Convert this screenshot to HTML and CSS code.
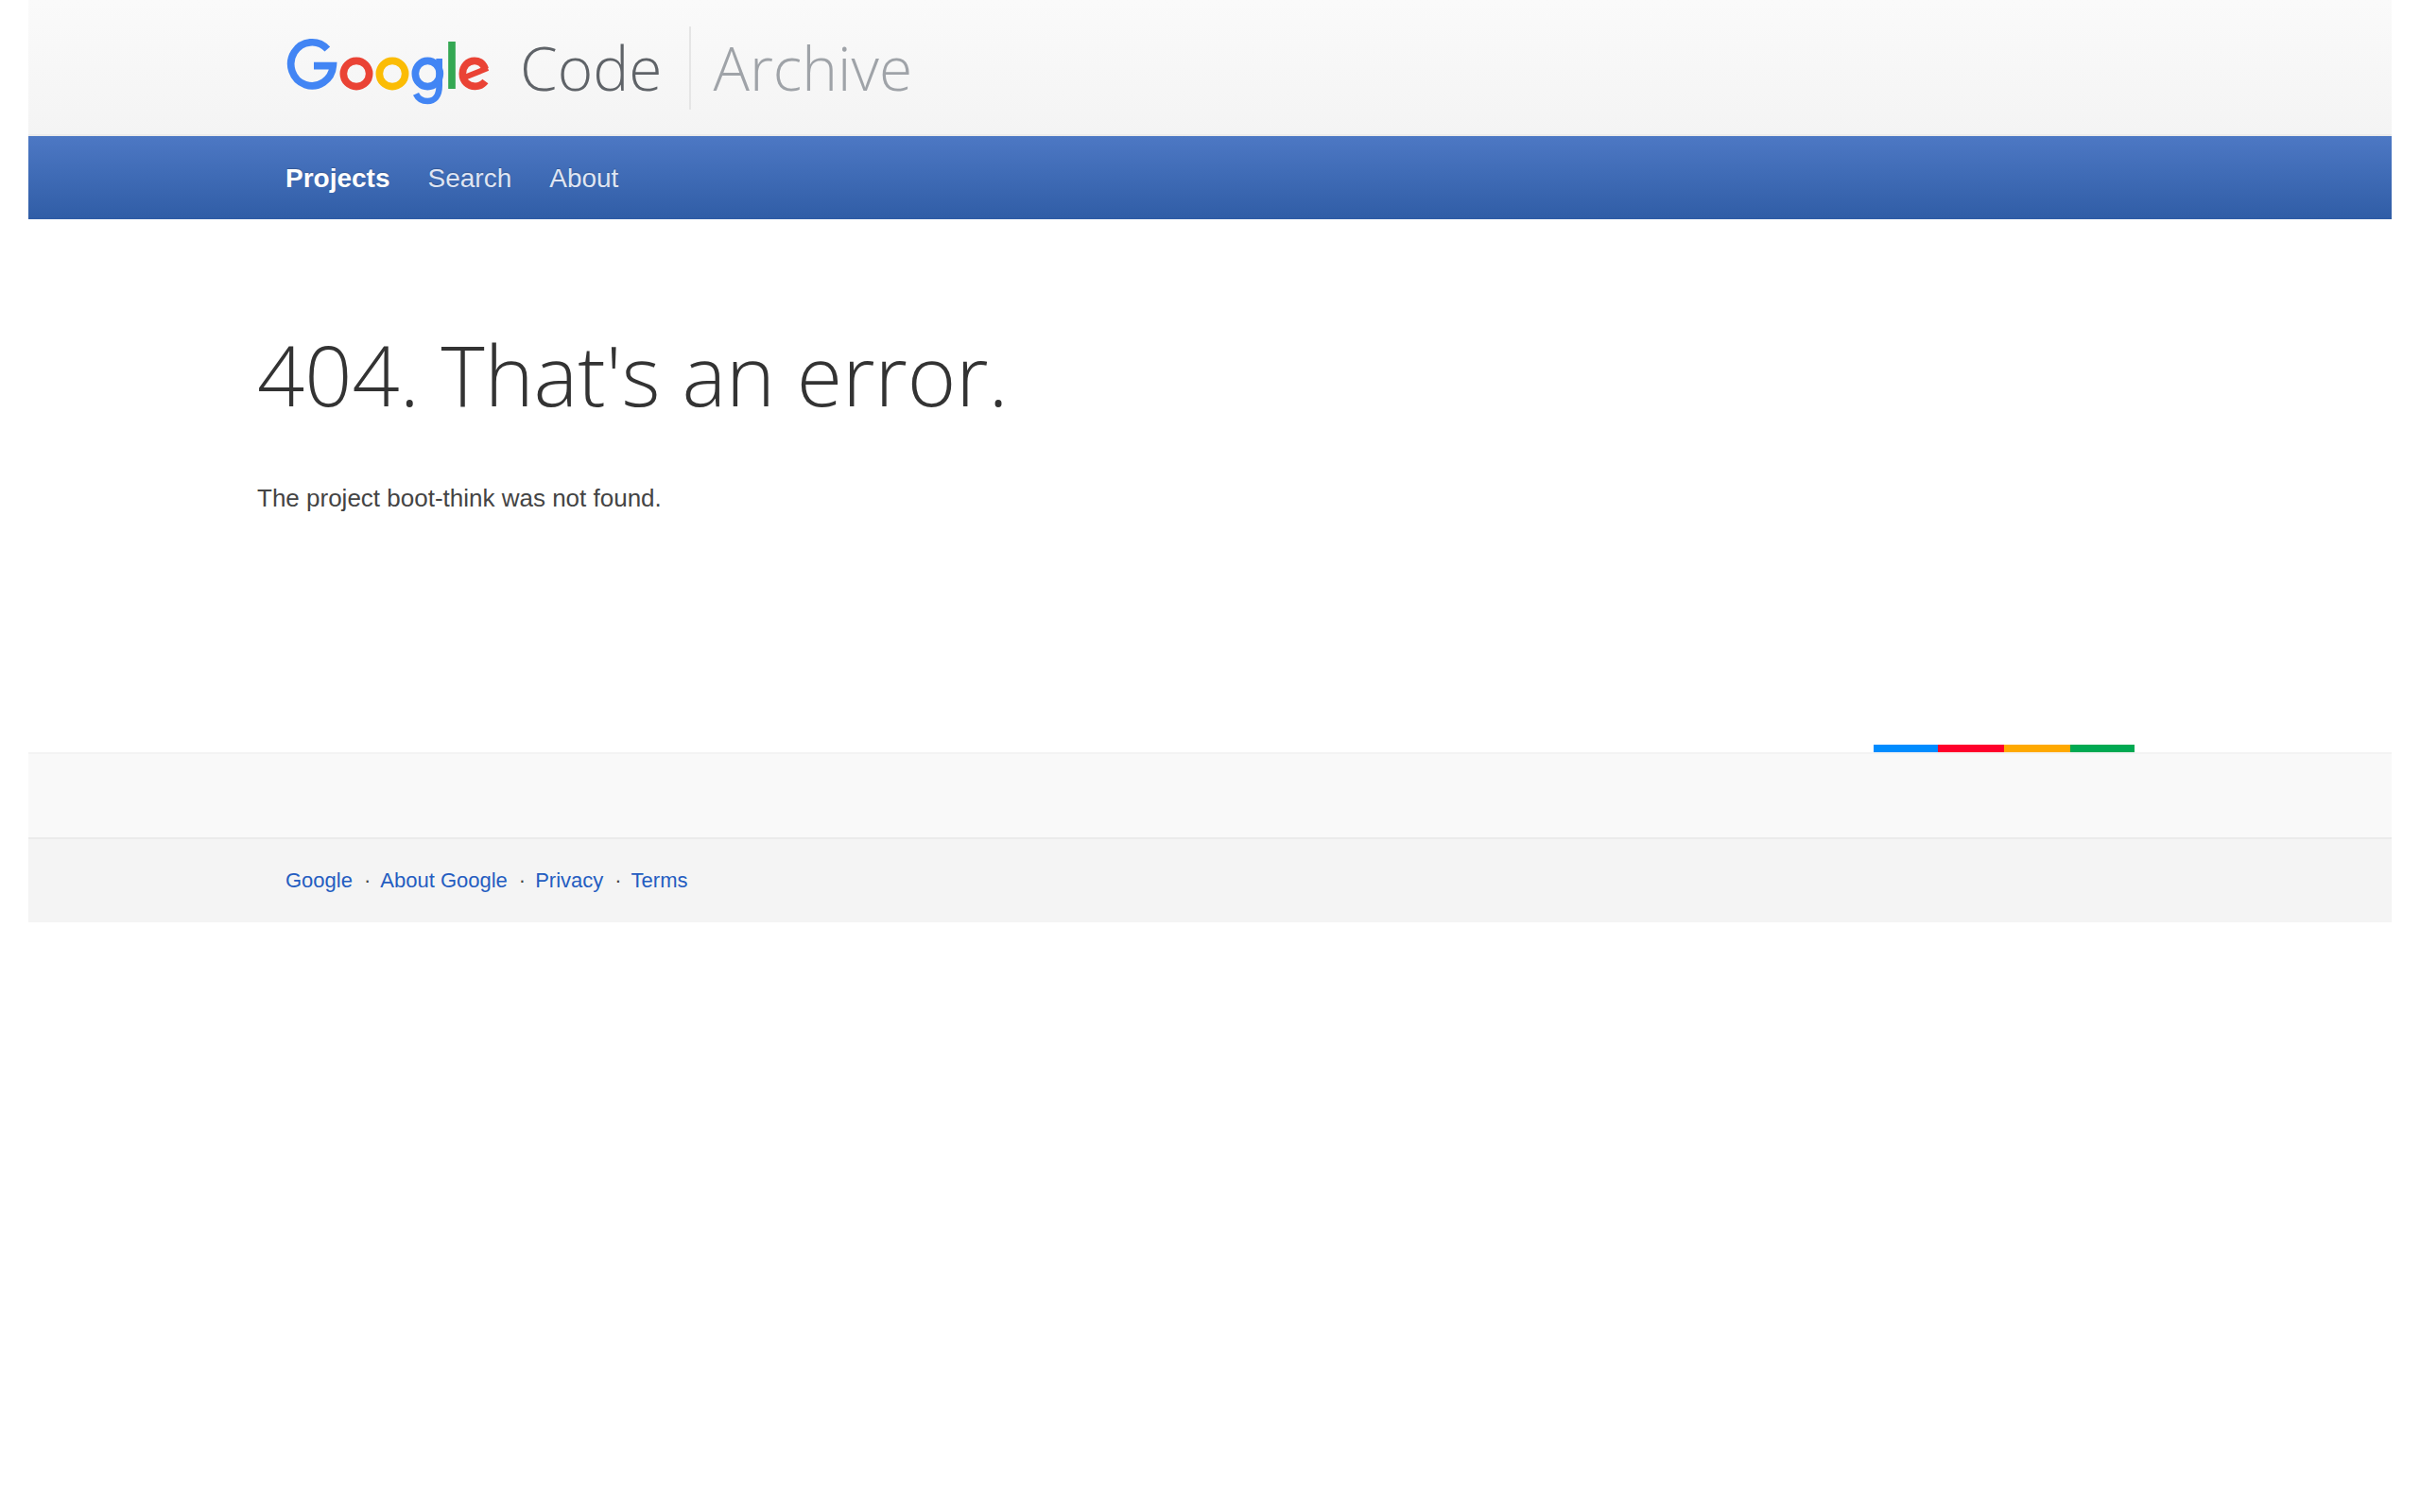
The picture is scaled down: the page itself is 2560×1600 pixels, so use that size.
FILE: index.html
```html
<!DOCTYPE html>
<html lang="en">
<head>
<meta charset="utf-8">
<meta name="viewport" content="width=device-width, initial-scale=1">
<title>Google Code Archive</title>
<link rel="stylesheet" href="styles.css">
</head>
<body>
<header class="masthead">
  <div class="container brand">
    <a class="brand-link" href="#" aria-label="Google Code">
      <svg class="logo" viewBox="36 60 654 216" fill="none" stroke-width="23" aria-hidden="true">
        <path stroke="#4285f4" stroke-width="23" d="M169 96A67 69 0 1 0 187 149H126"/>
        <circle stroke="#ea4335" cx="261" cy="174" r="41"/>
        <circle stroke="#fbbc05" cx="375" cy="174" r="41"/>
        <ellipse stroke="#4285f4" cx="487" cy="174" rx="39" ry="41"/>
        <path stroke="#4285f4" stroke-width="20" d="M524 126V212C524 246 508 261 487 261C469 261 457 253 450 238"/>
        <path stroke="#34a853" d="M564 72V222"/>
        <path stroke="#ea4335" d="M670 198C662 209 651 214 638 214C614 214 598 197 598 174C598 150 615 133 636 133C653 133 664 143 670 159"/>
        <path stroke="#ea4335" stroke-width="18" d="M602 187L678 156"/>
      </svg>
      <span class="brand-code">Code</span>
    </a>
    <a class="brand-archive" href="#">Archive</a>
  </div>
</header>
<nav class="navbar">
  <div class="container nav-links">
    <a class="active" href="#">Projects</a>
    <a href="#">Search</a>
    <a href="#">About</a>
  </div>
</nav>
<main class="container content">
  <h1>404. That's an error.</h1>
  <p>The project boot-think was not found.</p>
</main>
<footer class="footer">
  <div class="footer-top">
    <div class="container">
      <div class="stripe"><i class="blue"></i><i class="red"></i><i class="yellow"></i><i class="green"></i></div>
    </div>
  </div>
  <div class="footer-bottom">
    <div class="container footer-links">
      <a href="#">Google</a><span>·</span><a href="#">About Google</a><span>·</span><a href="#">Privacy</a><span>·</span><a href="#">Terms</a>
    </div>
  </div>
</footer>
</body>
</html>
```

FILE: styles.css
```css
* { box-sizing: border-box; }

body {
  margin: 0 30px;
  background: #fff;
  color: #444;
  font: 26px/40px "Liberation Sans", Arial, sans-serif;
}

a { text-decoration: none; }

.container {
  max-width: 2016px;
  margin: 0 auto;
  padding: 0 30px;
}

.masthead {
  border-bottom: 2px solid #ebebeb;
  background: linear-gradient(#fafafa, #f4f4f4);
}

.brand {
  display: flex;
  padding-top: 28px;
  padding-bottom: 26px;
  font-family: "Open Sans", sans-serif;
  font-size: 64px;
  font-weight: 300;
  line-height: 88px;
}

.brand-link {
  display: flex;
  align-items: center;
  gap: 30px;
  padding-right: 28px;
  border-right: 2px solid #e5e5e5;
  color: #5f6368;
}

.logo {
  display: block;
  width: 218px;
  height: 72px;
  margin-top: 8px;
}

.brand-archive {
  padding-left: 24px;
  color: #9fa3a8;
}

.navbar {
  background: linear-gradient(#4d78c4, #305da6);
}

.nav-links {
  display: flex;
  gap: 40px;
  padding-top: 2px;
  font-size: 28px;
  line-height: 86px;
  text-shadow: 0 -1px 1px rgba(0, 0, 0, 0.2);
}

.nav-links a { color: #dfe5f3; }
.nav-links .active { color: #fff; font-weight: bold; }

.content {
  padding: 104px 0 249px;
}

h1 {
  margin: 0 0 51px;
  color: #333;
  font-family: "Open Sans", sans-serif;
  font-size: 88px;
  font-weight: 300;
  line-height: 120px;
}

p { margin: 0; }

.footer-top {
  height: 90px;
  border-top: 2px solid #f3f3f3;
  background: #f9f9f9;
}

.footer-top .container { position: relative; }

.stripe {
  position: absolute;
  right: 30px;
  bottom: 2px;
  display: flex;
}

.stripe i { width: 70px; height: 8px; }
.stripe .blue { width: 68px; background: #008cff; }
.stripe .red { background: #ff002b; }
.stripe .yellow { background: #ffa900; }
.stripe .green { width: 68px; background: #00a952; }

.footer-bottom {
  border-top: 2px solid #ebebeb;
  background: #f4f4f4;
}

.footer-links {
  display: flex;
  font-size: 22px;
  line-height: 88px;
}

.footer-links a { color: #245dc1; }
.footer-links span { padding: 0 10px 0 12px; }
```
